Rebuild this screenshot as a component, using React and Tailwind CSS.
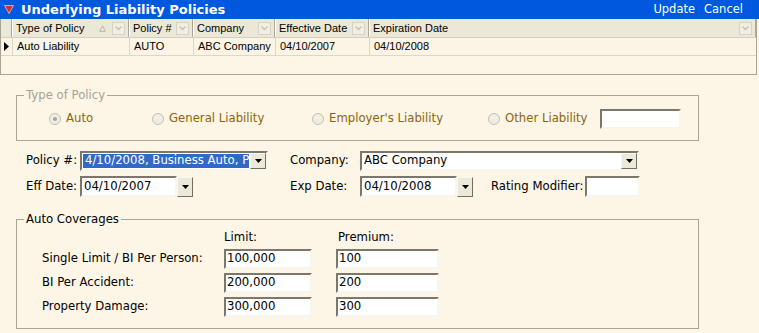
const bevel =
  "border-2 border-t-[#7b786b] border-l-[#7b786b] border-b-[#f7f5ec] border-r-[#f7f5ec] bg-white";

function DropButton({ className = "" }) {
  return (
    <div
      className={`flex items-center justify-center bg-[#ece9d8] border border-t-[#f8f7f0] border-l-[#f8f7f0] border-b-[#716f64] border-r-[#716f64] ${className}`}
    >
      <svg width="7" height="4" viewBox="0 0 7 4">
        <path d="M0 0h7L3.5 4z" fill="#000" />
      </svg>
    </div>
  );
}

function FilterButton() {
  return (
    <div className="w-[13px] h-[13px] border border-[#d6d3c4] bg-[#f1efe4] flex items-center justify-center">
      <svg width="7" height="5" viewBox="0 0 7 5">
        <path d="M0.5 0.5l3 3 3-3" stroke="#c4c1b2" strokeWidth="1.4" fill="none" />
      </svg>
    </div>
  );
}

function Radio({ checked, label, width }) {
  return (
    <div className="flex items-center gap-[5px]" style={{ width }}>
      <div className="w-[12px] h-[12px] rounded-full border border-[#c3c0b0] bg-[#f0eee4] flex items-center justify-center">
        {checked && <div className="w-[4px] h-[4px] rounded-full bg-[#a7a497]" />}
      </div>
      <span className="text-[#8c6510]">{label}</span>
    </div>
  );
}

const columns = [
  { title: "Type of Policy", width: 117, value: "Auto Liability", sort: true },
  { title: "Policy #", width: 64, value: "AUTO" },
  { title: "Company", width: 82, value: "ABC Company" },
  { title: "Effective Date", width: 94, value: "04/10/2007" },
  { title: "Expiration Date", width: 387, value: "04/10/2008" },
];

const coverages = [
  { label: "Single Limit / BI Per Person:", limit: "100,000", premium: "100" },
  { label: "BI Per Accident:", limit: "200,000", premium: "200" },
  { label: "Property Damage:", limit: "300,000", premium: "300" },
];

export default function App() {
  return (
    <div
      className="w-[759px] h-[333px] overflow-hidden bg-[#fdf5e6] text-[11.7px] text-black"
      style={{ fontFamily: '"DejaVu Sans", Verdana, sans-serif' }}
    >
      {/* title bar */}
      <div className="h-[19px] bg-[#0058de] flex items-center justify-between pl-[4px] pr-[16px] text-white">
        <div className="flex items-center gap-[7px]">
          <svg width="10" height="9" viewBox="0 0 10 9">
            <path d="M0.5 0.5h9L5 8.5z" fill="#c8352a" stroke="#f0a090" strokeWidth="1" />
          </svg>
          <span className="font-bold text-[13px]">Underlying Liability Policies</span>
        </div>
        <div className="flex gap-[9px] text-[11.5px]">
          <span>Update</span>
          <span>Cancel</span>
        </div>
      </div>

      {/* grid */}
      <div
        className="w-[757px] h-[56px] border-l border-b border-r border-[#a9a594] text-[11px]"
        style={{ fontFamily: '"Liberation Sans", Arial, sans-serif' }}
      >
        <div className="flex h-[19px] bg-[#ebe8d7] border-b border-[#d4d0c0]">
          <div className="w-[11px] border-r border-[#aca899]" />
          {columns.map((c) => (
            <div
              key={c.title}
              className="flex items-center justify-between pl-[3px] pr-[3px] border-l border-white border-r border-r-[#aca899] box-border"
              style={{ width: c.width }}
            >
              <span>{c.title}</span>
              <div className="flex items-center gap-[6px]">
                {c.sort && (
                  <svg width="7" height="7" viewBox="0 0 7 7">
                    <path d="M3.5 0.8L6.3 6.3H0.7z" fill="none" stroke="#b9b6a8" strokeWidth="1" />
                  </svg>
                )}
                <FilterButton />
              </div>
            </div>
          ))}
        </div>
        <div className="flex h-[18px] bg-[#fcf4e4] border-b border-[#dcd8c8]">
          <div className="w-[11px] flex items-center justify-center">
            <svg width="5" height="9" viewBox="0 0 5 9">
              <path d="M0 0l5 4.5L0 9z" fill="#000" />
            </svg>
          </div>
          {columns.map((c) => (
            <div
              key={c.title}
              className="flex items-center pl-[4px] border-l border-[#dcd8c8]"
              style={{ width: c.width }}
            >
              {c.value}
            </div>
          ))}
        </div>
      </div>

      {/* type of policy */}
      <fieldset className="ml-[16px] mt-[12px] w-[683px] h-[54px] border border-[#a9a594] px-0">
        <legend className="ml-[7px] px-[2px] text-[#a7a495]">Type of Policy</legend>
        <div className="flex items-center h-[32px] pb-[4px] pl-[32px]">
          <Radio checked label="Auto" width={103} />
          <Radio label="General Liability" width={160} />
          <Radio label="Employer's Liability" width={176} />
          <Radio label="Other Liability" width={112} />
          <div className={`w-[81px] h-[20px] ${bevel}`} />
        </div>
      </fieldset>

      {/* policy / company rows */}
      <div className="flex flex-col gap-[5px] mt-[10px] pl-[26px]">
        <div className="flex items-center h-[20px]">
          <div className="w-[54px]">Policy #:</div>
          <div className={`w-[188px] h-[20px] flex ${bevel}`}>
            <div className="flex-1 flex items-center pl-[1px] pr-[1px] py-[1px] min-w-0">
              <div className="h-full w-full bg-[#316ac5] text-white flex items-center pl-[2px] overflow-hidden whitespace-nowrap">
                4/10/2008, Business Auto, P
              </div>
            </div>
            <DropButton className="w-[16px] shrink-0" />
          </div>
          <div className="w-[22px]" />
          <div className="w-[70px]">Company:</div>
          <div className={`w-[279px] h-[20px] flex ${bevel}`}>
            <div className="flex-1 flex items-center pl-[2px]">ABC Company</div>
            <DropButton className="w-[16px]" />
          </div>
        </div>
        <div className="flex items-center h-[21px]">
          <div className="w-[54px]">Eff Date:</div>
          <div className={`w-[97px] h-[21px] flex items-center pl-[2px] ${bevel}`}>04/10/2007</div>
          <DropButton className="w-[16px] h-[20px]" />
          <div className="w-[97px]" />
          <div className="w-[70px]">Exp Date:</div>
          <div className={`w-[97px] h-[21px] flex items-center pl-[2px] ${bevel}`}>04/10/2008</div>
          <DropButton className="w-[16px] h-[20px]" />
          <div className="w-[18px]" />
          <div className="w-[94px] whitespace-nowrap">Rating Modifier:</div>
          <div className={`w-[55px] h-[21px] ${bevel}`} />
        </div>
      </div>

      {/* auto coverages */}
      <fieldset className="ml-[16px] mt-[14px] w-[683px] h-[118px] border border-[#a9a594] px-0">
        <legend className="ml-[7px] px-[2px]">Auto Coverages</legend>
        <div className="pl-[25px]">
          <div className="grid grid-cols-[182px_88px_24px_103px] items-center">
            <div className="h-[18px]" />
            <div className="h-[18px] flex items-center">Limit:</div>
            <div />
            <div className="h-[18px] flex items-center pl-[2px]">Premium:</div>
          </div>
          <div className="flex flex-col gap-[4px] mt-[2px]">
            {coverages.map((r) => (
              <div key={r.label} className="grid grid-cols-[182px_88px_24px_103px] items-center">
                <div className="whitespace-nowrap">{r.label}</div>
                <div className={`h-[20px] flex items-center pl-[1px] ${bevel}`}>{r.limit}</div>
                <div />
                <div className={`h-[20px] flex items-center pl-[1px] ${bevel}`}>{r.premium}</div>
              </div>
            ))}
          </div>
        </div>
      </fieldset>
    </div>
  );
}
